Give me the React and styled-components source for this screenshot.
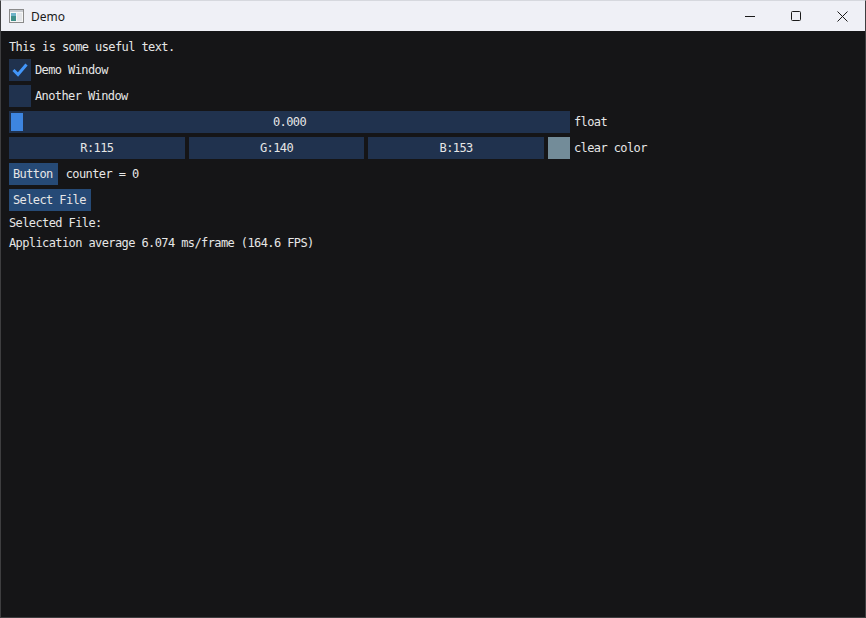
import React from 'react';
import styled, { createGlobalStyle } from 'styled-components'

const GlobalStyle = createGlobalStyle`
  html, body {
    margin: 0;
    padding: 0;
    background-color: #151517;
    overflow: hidden;
  }
`
/*Outer native window*/
const Window = styled.div`
  width: 866px;
  height: 618px;
  box-sizing: border-box;
  border: 1px solid #3e3e40;
  border-top-color: #d6d8de;
  display: flex;
  flex-direction: column;
  background-color: #151517;
`
/*Title bar settings*/
const TitleBar = styled.div`
  height: 30px;
  flex-shrink: 0;
  background-color: #eff0f6;
  display: flex;
  align-items: center;
`
const TitleIcon = styled.div`
  width: 15px;
  height: 14px;
  margin-left: 8px;
  display: flex;
`
const TitleText = styled.span`
  margin-left: 7px;
  font-family: 'Noto Sans', 'Open Sans', sans-serif;
  font-size: 12px;
  color: #1a1a1a;
`
const Controls = styled.div`
  margin-left: auto;
  display: flex;
  height: 100%;
`
const ControlButton = styled.div`
  width: 46px;
  height: 100%;
  display: flex;
  align-items: center;
  justify-content: center;
`
/*ImGui content area*/
const Content = styled.div`
  flex: 1;
  padding: 8px;
  display: flex;
  flex-direction: column;
  gap: 4px;
  font-family: 'DejaVu Sans Mono', 'Liberation Mono', monospace;
  font-size: 12px;
  letter-spacing: -0.6px;
  color: #e6e6e6;
`
const Line = styled.div`
  height: 16px;
  line-height: 16px;
  white-space: pre;
`
const Row = styled.div`
  display: flex;
  align-items: center;
  height: 22px;
  gap: ${props => props.gap || 4}px;
`
const Label = styled.span`
  white-space: pre;
  line-height: 22px;
`
const Checkbox = styled.div`
  width: 22px;
  height: 22px;
  background-color: #20324e;
  display: flex;
  align-items: center;
  justify-content: center;
`
const Slider = styled.div`
  position: relative;
  width: 561px;
  height: 22px;
  background-color: #20324e;
  display: flex;
  align-items: center;
  justify-content: center;
`
const Grab = styled.div`
  position: absolute;
  left: 2px;
  top: 2px;
  width: 12px;
  height: 18px;
  background-color: #3d85e0;
`
const ColorFields = styled.div`
  width: 561px;
  display: flex;
  gap: 4px;
  height: 22px;
`
const Field = styled.div`
  flex: 1;
  background-color: #20324e;
  display: flex;
  align-items: center;
  justify-content: center;
`
const Swatch = styled.div`
  width: 22px;
  height: 22px;
  flex-shrink: 0;
  background-color: ${props => props.color};
`
const Button = styled.div`
  height: 22px;
  padding: 0 5px 0 4px;
  background-color: #264a76;
  display: flex;
  align-items: center;
  white-space: pre;
`

function WindowIcon(){
return(
  <svg width="15" height="14" viewBox="0 0 15 14">
    <rect x="0.5" y="0.5" width="14" height="13" fill="#f6f6f6" stroke="#8a8a8a"/>
    <rect x="1" y="1" width="13" height="2" fill="#c9ccd2"/>
    <rect x="2" y="4" width="5" height="8" fill="#3f8f8a"/>
    <rect x="2" y="4" width="5" height="3" fill="#6fb3c9"/>
    <rect x="8" y="4" width="5" height="8" fill="#e4e6ea"/>
  </svg>
)
}

function App(){
const clearColor = { r: 115, g: 140, b: 153 }
return(
  <Window>
    <GlobalStyle/>
    <TitleBar>
      <TitleIcon><WindowIcon/></TitleIcon>
      <TitleText>Demo</TitleText>
      <Controls>
        <ControlButton>
          <svg width="10" height="10" viewBox="0 0 10 10">
            <line x1="0" y1="5.5" x2="10" y2="5.5" stroke="#1a1a1a" strokeWidth="1"/>
          </svg>
        </ControlButton>
        <ControlButton>
          <svg width="10" height="10" viewBox="0 0 10 10">
            <rect x="0.5" y="0.5" width="9" height="9" rx="1" fill="none" stroke="#1a1a1a" strokeWidth="1"/>
          </svg>
        </ControlButton>
        <ControlButton>
          <svg width="11" height="11" viewBox="0 0 11 11">
            <path d="M0.5 0.5 L10.5 10.5 M10.5 0.5 L0.5 10.5" stroke="#1a1a1a" strokeWidth="1"/>
          </svg>
        </ControlButton>
      </Controls>
    </TitleBar>
    <Content>
      <Line>This is some useful text.</Line>
      <Row>
        <Checkbox>
          <svg width="16" height="14" viewBox="0 0 16 14">
            <polyline points="1.5,7 6,11.5 14.5,1.5" fill="none" stroke="#4296fa" strokeWidth="3"/>
          </svg>
        </Checkbox>
        <Label>Demo Window</Label>
      </Row>
      <Row>
        <Checkbox/>
        <Label>Another Window</Label>
      </Row>
      <Row>
        <Slider>
          <Grab/>
          0.000
        </Slider>
        <Label>float</Label>
      </Row>
      <Row>
        <ColorFields>
          <Field>R:{clearColor.r}</Field>
          <Field>G:{clearColor.g}</Field>
          <Field>B:{clearColor.b}</Field>
          <Swatch color={`rgb(${clearColor.r}, ${clearColor.g}, ${clearColor.b})`}/>
        </ColorFields>
        <Label>clear color</Label>
      </Row>
      <Row gap={8}>
        <Button>Button</Button>
        <Label>counter = 0</Label>
      </Row>
      <Row>
        <Button>Select File</Button>
      </Row>
      <Line>Selected File:</Line>
      <Line>Application average 6.074 ms/frame (164.6 FPS)</Line>
    </Content>
  </Window>
)
}
export default App;
